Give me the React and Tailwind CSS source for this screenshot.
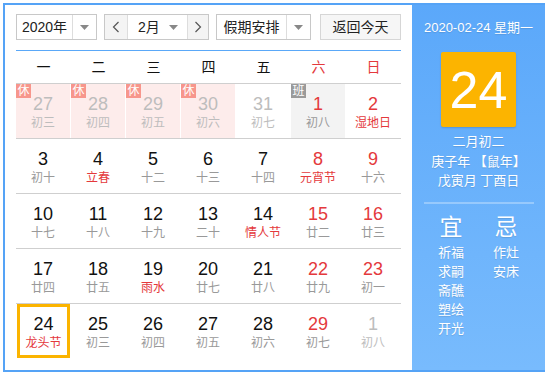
// App.jsx — perpetual calendar widget (month grid + day detail panel)

import React from 'react';

const FONT = { fontFamily: '"Liberation Sans", "Noto Sans CJK SC", sans-serif' };

const WEEK = ['一', '二', '三', '四', '五', '六', '日'];

// n: day, l: lunar/festival, red: red number, lred: red lunar text,
// fade: other month, tag: 休/班 badge, sel: selected day
const ROWS = [
  [
    { n: 27, l: '初三', fade: true, tag: '休' },
    { n: 28, l: '初四', fade: true, tag: '休' },
    { n: 29, l: '初五', fade: true, tag: '休' },
    { n: 30, l: '初六', fade: true, tag: '休' },
    { n: 31, l: '初七', fade: true },
    { n: 1, l: '初八', red: true, tag: '班' },
    { n: 2, l: '湿地日', red: true, lred: true },
  ],
  [
    { n: 3, l: '初十' },
    { n: 4, l: '立春', lred: true },
    { n: 5, l: '十二' },
    { n: 6, l: '十三' },
    { n: 7, l: '十四' },
    { n: 8, l: '元宵节', red: true, lred: true },
    { n: 9, l: '十六', red: true },
  ],
  [
    { n: 10, l: '十七' },
    { n: 11, l: '十八' },
    { n: 12, l: '十九' },
    { n: 13, l: '二十' },
    { n: 14, l: '情人节', lred: true },
    { n: 15, l: '廿二', red: true },
    { n: 16, l: '廿三', red: true },
  ],
  [
    { n: 17, l: '廿四' },
    { n: 18, l: '廿五' },
    { n: 19, l: '雨水', lred: true },
    { n: 20, l: '廿七' },
    { n: 21, l: '廿八' },
    { n: 22, l: '廿九', red: true },
    { n: 23, l: '初一', red: true },
  ],
  [
    { n: 24, l: '龙头节', lred: true, sel: true },
    { n: 25, l: '初三' },
    { n: 26, l: '初四' },
    { n: 27, l: '初五' },
    { n: 28, l: '初六' },
    { n: 29, l: '初七', red: true },
    { n: 1, l: '初八', fade: true },
  ],
];

const YI = ['祈福', '求嗣', '斋醮', '塑绘', '开光'];
const JI = ['作灶', '安床'];

function Caret() {
  return (
    <svg width="9" height="5" viewBox="0 0 9 5">
      <path d="M0 0h9L4.5 5z" fill="#888" />
    </svg>
  );
}

function Chevron({ dir }) {
  return (
    <svg width="8" height="12" viewBox="0 0 8 12">
      <path
        d={dir === 'left' ? 'M6.5 1L1.5 6l5 5' : 'M1.5 1l5 5-5 5'}
        fill="none"
        stroke="#555"
        strokeWidth="1.2"
      />
    </svg>
  );
}

function Select({ label, textW, arrowW }) {
  return (
    <div className="flex h-[26px] border border-[#c8c8c8] bg-white">
      <div className={`flex items-center justify-center ${textW} text-[14px] text-[#222]`}>{label}</div>
      <div className={`flex items-center justify-center ${arrowW} border-l border-[#ddd]`}>
        <Caret />
      </div>
    </div>
  );
}

function DayCell({ d }) {
  let bg = '';
  if (d.tag === '休') bg = 'bg-[#fdeceb]';
  if (d.tag === '班') bg = 'bg-[#f3f3f3]';

  let numColor = 'text-[#111]';
  if (d.red) numColor = 'text-[#e4393c]';
  if (d.fade) numColor = 'text-[#bdbdbd]';

  let lunarColor = 'text-[#999]';
  if (d.lred) lunarColor = 'text-[#e4393c]';
  if (d.fade) lunarColor = 'text-[#bdbdbd]';

  return (
    <div className="relative h-[54px] pr-px">
      <div
        className={`relative flex h-full flex-col items-center ${bg} ${
          d.sel ? 'ml-px border-[3px] border-[#fbb400] pt-[7px]' : 'pt-[10px]'
        }`}
      >
        {d.tag && (
          <span
            className={`absolute left-0 top-0 flex h-[14px] w-[15px] items-center justify-center text-[12px] leading-none text-white ${
              d.tag === '休' ? 'bg-[#f7968c]' : 'bg-[#9a9a9a]'
            }`}
          >
            {d.tag}
          </span>
        )}
        <span className={`text-[18px] leading-[20px] ${numColor}`}>{d.n}</span>
        <span className={`mt-px text-[12px] leading-[16px] ${lunarColor}`}>{d.l}</span>
      </div>
    </div>
  );
}

export default function App() {
  return (
    <div style={FONT} className="ml-[3px] mt-[3px] flex h-[369px] w-[544px] border-2 border-[#55a3f6] bg-white">
      {/* ── Left: toolbar + month grid ── */}
      <div className="w-[407px] shrink-0 px-[11px] pt-[9px]">
        <div className="flex items-center">
          <Select label="2020年" textW="w-[55px]" arrowW="w-[24px]" />

          <div className="ml-[7px] flex h-[26px] border border-[#c8c8c8]">
            <div className="flex w-[22px] items-center justify-center bg-[#f4f4f4]">
              <Chevron dir="left" />
            </div>
            <div className="flex w-[61px] items-center border-x border-[#ddd] bg-white pl-[10px] text-[14px] text-[#222]">
              <span>2月</span>
              <span className="ml-auto mr-[9px] flex">
                <Caret />
              </span>
            </div>
            <div className="flex w-[20px] items-center justify-center bg-[#f4f4f4]">
              <Chevron dir="right" />
            </div>
          </div>

          <div className="ml-[7px]">
            <Select label="假期安排" textW="w-[69px]" arrowW="w-[24px]" />
          </div>

          <button className="ml-[9px] flex h-[26px] w-[82px] items-center justify-center border border-[#d6d6d6] bg-[#f6f6f6] text-[14px] text-[#222]">
            返回今天
          </button>
        </div>

        <div className="mt-[10px] h-px bg-[#5aa8f8]" />

        {/* weekday header */}
        <div className="grid h-[33px] grid-cols-7 items-center border-b border-[#cfcfcf] text-[14px]">
          {WEEK.map((w, i) => (
            <div key={w} className={`text-center ${i >= 5 ? 'text-[#e4393c]' : 'text-[#111]'}`}>
              {w}
            </div>
          ))}
        </div>

        {ROWS.map((row, ri) => (
          <div
            key={ri}
            className={`grid grid-cols-7 ${ri < ROWS.length - 1 ? 'border-b border-[#cfcfcf]' : ''}`}
          >
            {row.map((d, ci) => (
              <DayCell key={ci} d={d} />
            ))}
          </div>
        ))}
      </div>

      {/* ── Right: selected-day detail ── */}
      <div className="flex flex-1 flex-col items-center bg-gradient-to-b from-[#5ba8fa] to-[#78bbfd] text-white [text-shadow:0_1px_1px_rgba(0,0,0,0.12)]">
        <div className="mt-[14px] text-[13px] leading-[18px]">2020-02-24 星期一</div>

        <div className="mt-[15px] flex h-[75px] w-[75px] items-center justify-center rounded-[2px] bg-[#fcb400] shadow-[0_1px_2px_rgba(0,0,0,0.15)]">
          <span className="text-[52px] leading-none [text-shadow:none]">24</span>
        </div>

        <div className="mt-[5px] flex flex-col items-center text-[13px] leading-[19.5px]">
          <span>二月初二</span>
          <span>庚子年 【鼠年】</span>
          <span>戊寅月 丁酉日</span>
        </div>

        <div className="mt-[11px] h-[2px] w-[110px] bg-white/30" />

        <div className="mt-[8px] flex gap-[9px]">
          <div className="flex w-[46px] flex-col items-center">
            <span className="text-[23px] leading-[30px]">宜</span>
            <div className="mt-[1px] flex flex-col text-[13px] leading-[19px]">
              {YI.map((t) => (
                <span key={t}>{t}</span>
              ))}
            </div>
          </div>
          <div className="flex w-[46px] flex-col items-center">
            <span className="text-[23px] leading-[30px]">忌</span>
            <div className="mt-[1px] flex flex-col text-[13px] leading-[19px]">
              {JI.map((t) => (
                <span key={t}>{t}</span>
              ))}
            </div>
          </div>
        </div>
      </div>
    </div>
  );
}
